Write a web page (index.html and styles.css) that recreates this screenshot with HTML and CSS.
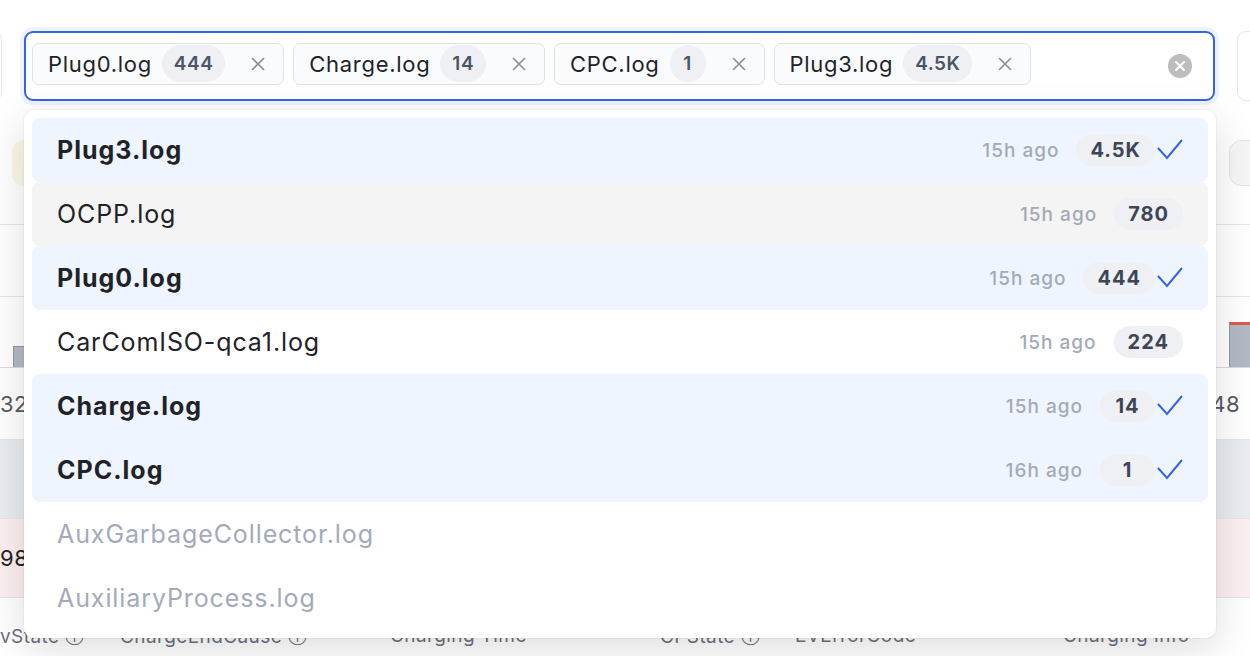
FILE: index.html
```html
<!DOCTYPE html>
<html lang="en">
<head>
  <meta charset="UTF-8">
  <title>Log files</title>
  <link rel="stylesheet" href="styles.css">
</head>
<body>

<div class="pagina">
  <!-- barra superior con el selector de logs -->
  <div class="barra">
    <div class="caja-lateral"></div>

    <div class="selector">
      <div class="chips">
        <div class="chip">
          <span class="chip-nombre">Plug0.log</span>
          <span class="chip-cuenta">444</span>
          <svg class="chip-cerrar" viewBox="0 0 16 16"><path d="M2 2 L14 14 M14 2 L2 14"/></svg>
        </div>
        <div class="chip">
          <span class="chip-nombre">Charge.log</span>
          <span class="chip-cuenta">14</span>
          <svg class="chip-cerrar" viewBox="0 0 16 16"><path d="M2 2 L14 14 M14 2 L2 14"/></svg>
        </div>
        <div class="chip">
          <span class="chip-nombre">CPC.log</span>
          <span class="chip-cuenta">1</span>
          <svg class="chip-cerrar" viewBox="0 0 16 16"><path d="M2 2 L14 14 M14 2 L2 14"/></svg>
        </div>
        <div class="chip">
          <span class="chip-nombre">Plug3.log</span>
          <span class="chip-cuenta">4.5K</span>
          <svg class="chip-cerrar" viewBox="0 0 16 16"><path d="M2 2 L14 14 M14 2 L2 14"/></svg>
        </div>
      </div>
      <svg class="limpiar" viewBox="0 0 24 24">
        <circle cx="12" cy="12" r="12" fill="#bdbdbd"/>
        <path d="M8 8 L16 16 M16 8 L8 16" stroke="#fff" stroke-width="2" stroke-linecap="round"/>
      </svg>
    </div>

    <div class="caja-lateral"></div>
  </div>

  <div class="filtros">
    <div class="pastilla amarilla"></div>
    <div class="pastilla gris"></div>
  </div>

  <div class="resumen"></div>

  <div class="grafico">
    <div class="barra-grafico izq"></div>
    <div class="barra-grafico der"></div>
  </div>

  <div class="ejes">
    <span class="eje izq">32</span>
    <span class="eje der">48</span>
  </div>

  <div class="fila-tabla gris-claro"></div>
  <div class="fila-tabla rosa"><span class="valor">98</span></div>

  <div class="cabecera">
    <span class="col c1">vState ⓘ</span>
    <span class="col c2">ChargeEndCause ⓘ</span>
    <span class="col c3">Charging Time</span>
    <span class="col c4">CPState ⓘ</span>
    <span class="col c5">EVErrorCode</span>
    <span class="col c6">Charging Info</span>
  </div>
</div>

<!-- Lista desplegable -->
<div class="desplegable">
  <div class="opcion elegida sola">
    <span class="opcion-nombre">Plug3.log</span>
    <span class="hace">15h ago</span>
    <span class="cuenta">4.5K</span>
    <svg class="marca" viewBox="0 0 26 22"><path d="M1 9 L10 19 L25 1"/></svg>
  </div>
  <div class="opcion encima">
    <span class="opcion-nombre">OCPP.log</span>
    <span class="hace">15h ago</span>
    <span class="cuenta">780</span>
  </div>
  <div class="opcion elegida sola">
    <span class="opcion-nombre">Plug0.log</span>
    <span class="hace">15h ago</span>
    <span class="cuenta">444</span>
    <svg class="marca" viewBox="0 0 26 22"><path d="M1 9 L10 19 L25 1"/></svg>
  </div>
  <div class="opcion">
    <span class="opcion-nombre">CarComISO-qca1.log</span>
    <span class="hace">15h ago</span>
    <span class="cuenta">224</span>
  </div>
  <div class="opcion elegida primera">
    <span class="opcion-nombre">Charge.log</span>
    <span class="hace">15h ago</span>
    <span class="cuenta">14</span>
    <svg class="marca" viewBox="0 0 26 22"><path d="M1 9 L10 19 L25 1"/></svg>
  </div>
  <div class="opcion elegida ultima">
    <span class="opcion-nombre">CPC.log</span>
    <span class="hace">16h ago</span>
    <span class="cuenta">1</span>
    <svg class="marca" viewBox="0 0 26 22"><path d="M1 9 L10 19 L25 1"/></svg>
  </div>
  <div class="opcion vacia">
    <span class="opcion-nombre">AuxGarbageCollector.log</span>
  </div>
  <div class="opcion vacia">
    <span class="opcion-nombre">AuxiliaryProcess.log</span>
  </div>
</div>

</body>
</html>
```

FILE: styles.css
```css
body {
  margin: 0;
  overflow: hidden;
  background: #fff;
  color: #1f2328;
  font-family: 'Inter', 'Noto Sans', sans-serif;
}

.pagina {
  padding-top: 31px;
}

/* barra superior */
.barra {
  display: flex;
  gap: 22px;
  height: 70px;
  margin-left: -98px;
}

.caja-lateral {
  flex: 0 0 100px;
  box-sizing: border-box;
  border: 1px solid #e3e6ea;
  border-radius: 9px;
}

.selector {
  flex: 0 0 1191px;
  box-sizing: border-box;
  display: flex;
  align-items: center;
  border: 2px solid #3563e9;
  border-radius: 9px;
  box-shadow: 0 0 0 4px #eef3fd;
  background: #fff;
}

.chips {
  flex: 1;
  display: flex;
  gap: 9px;
  padding: 9px 6px 14px;
}

.chip {
  display: flex;
  align-items: center;
  height: 42px;
  box-sizing: border-box;
  padding: 0 17px 0 15px;
  border: 1px solid #dfe3ea;
  border-radius: 7px;
  background: #fafbfc;
}

.chip-nombre {
  font-size: 22px;
  letter-spacing: 0.7px;
  color: #1f2328;
}

.chip-cuenta {
  margin-left: 10px;
  min-width: 36px;
  box-sizing: border-box;
  text-align: center;
  height: 37px;
  line-height: 37px;
  padding: 0 12px;
  border-radius: 19px;
  background: #eef0f4;
  color: #4a5567;
  font-size: 19px;
  font-weight: 600;
  letter-spacing: 0.5px;
}

.chip-cerrar {
  width: 16px;
  height: 16px;
  margin-left: 25px;
  fill: none;
  stroke: #8c8f95;
  stroke-width: 1.7;
}

.limpiar {
  width: 24px;
  height: 24px;
  margin-right: 21px;
  flex: 0 0 24px;
}

/* fondo de la pagina */
.filtros {
  display: flex;
  justify-content: space-between;
  margin-top: 39px;
  height: 46px;
}

.pastilla {
  width: 100px;
  border-radius: 12px;
  box-sizing: border-box;
}

.pastilla.amarilla {
  margin-left: 12px;
  background: #fcf8e6;
}

.pastilla.gris {
  margin-right: -79px;
  background: #f6f6f7;
  border: 1px solid #e3e5e8;
}

.resumen {
  margin-top: 38px;
  height: 71px;
  border-top: 1px solid #e4e6ea;
  border-bottom: 1px solid #e4e6ea;
}

.grafico {
  display: flex;
  justify-content: space-between;
  align-items: flex-end;
  height: 70px;
  border-bottom: 1px solid #d8dbe0;
}

.barra-grafico {
  box-sizing: border-box;
  background: #b3b9c4;
  border: 1px solid #8f97a4;
  border-bottom: none;
}

.barra-grafico.izq {
  margin-left: 13px;
  width: 14px;
  height: 21px;
}

.barra-grafico.der {
  margin-right: -20px;
  width: 41px;
  height: 45px;
  border-top: 3px solid #e25555;
}

.ejes {
  display: flex;
  justify-content: space-between;
  align-items: center;
  height: 71px;
  border-bottom: 1px solid #e4e6ea;
  font-size: 22px;
  letter-spacing: 0.5px;
  color: #555a62;
}

.eje.izq { margin-left: 0; }
.eje.der { margin-right: 10px; }

.fila-tabla {
  height: 78px;
  display: flex;
  align-items: center;
  border-bottom: 1px solid #e4e6ea;
}

.fila-tabla.gris-claro { background: #e9ecf0; }
.fila-tabla.rosa { background: #fbeff0; }

.valor {
  font-size: 22px;
  letter-spacing: 0.5px;
  color: #222;
}

.cabecera {
  position: relative;
  height: 58px;
  font-size: 19px;
  letter-spacing: 0.4px;
  color: #6b7280;
}

.col {
  position: absolute;
  top: 26px;
}

.c1 { left: 0; }
.c2 { left: 120px; }
.c3 { left: 390px; }
.c4 { left: 660px; }
.c5 { left: 795px; }
.c6 { left: 1063px; }

/* lista desplegable */
.desplegable {
  position: absolute;
  left: 24px;
  top: 110px;
  width: 1192px;
  box-sizing: border-box;
  padding: 8px;
  background: #fff;
  border-radius: 10px;
  box-shadow: 0 10px 40px rgba(0, 0, 0, 0.14), 0 0 0 1px rgba(0, 0, 0, 0.03);
}

.opcion {
  display: flex;
  align-items: center;
  height: 64px;
  padding: 0 25px;
}

.opcion-nombre {
  flex: 1;
  font-size: 25px;
  letter-spacing: 0.9px;
  color: #1f2328;
}

.opcion.elegida {
  background: #eff5fe;
}

.opcion.elegida .opcion-nombre {
  font-weight: 650;
  letter-spacing: 1px;
}

.opcion.sola,
.opcion.encima { border-radius: 8px; }
.opcion.primera { border-radius: 8px 8px 0 0; }
.opcion.ultima { border-radius: 0 0 8px 8px; }

.opcion.encima {
  background: #f4f4f5;
}

.opcion.vacia .opcion-nombre {
  color: #a1abb9;
}

.hace {
  margin-right: 17px;
  font-size: 19px;
  font-weight: 500;
  letter-spacing: 1px;
  color: #a3aab5;
}

.cuenta {
  min-width: 55px;
  box-sizing: border-box;
  text-align: center;
  height: 32px;
  line-height: 32px;
  padding: 0 14px;
  border-radius: 16px;
  background: #eff0f3;
  color: #3d4656;
  font-size: 20px;
  font-weight: 650;
  letter-spacing: 1px;
}

.marca {
  width: 26px;
  height: 22px;
  margin-left: 2px;
  fill: none;
  stroke: #3563e9;
  stroke-width: 2;
}
```
